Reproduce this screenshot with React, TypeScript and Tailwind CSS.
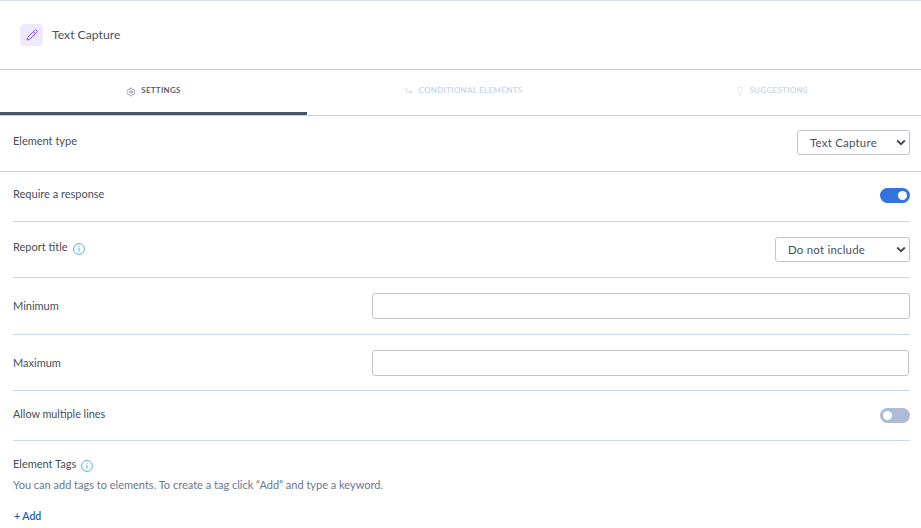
import { Lightbulb, Pencil, Settings, CornerDownRight } from "lucide-react";

function Info() {
  return (
    <svg width="12" height="12" viewBox="0 0 12 12" fill="none" className="ml-[5px] mt-[2px]">
      <circle cx="6" cy="6" r="5.4" stroke="#4fb3ea" strokeWidth="1" />
      <rect x="5.5" y="5" width="1" height="3.6" fill="#4fb3ea" />
      <rect x="5.5" y="3.1" width="1" height="1" fill="#4fb3ea" />
    </svg>
  );
}

function Select({ label, width }: { label: string; width: string }) {
  return (
    <div className={`${width} h-[25px] border border-[#c4c4c4] rounded-[3px] flex items-center justify-between pl-3 pr-[3px] text-[11.5px] text-[#4a5160] tracking-[0.2px]`}>
      <span>{label}</span>
      <svg width="10" height="7" viewBox="0 0 10 7" fill="none">
        <path d="M1.2 1.5 L5 5.2 L8.8 1.5" stroke="#3f4754" strokeWidth="1.8" />
      </svg>
    </div>
  );
}

function Toggle({ on }: { on: boolean }) {
  return (
    <div className={`w-[30px] h-[15px] rounded-full flex items-center px-[3px] ${on ? "bg-[#3273dc] justify-end" : "bg-[#aebbd6] justify-start"}`}>
      <div className="w-[9px] h-[9px] rounded-full bg-white" />
    </div>
  );
}

export default function App() {
  return (
    <div className="w-[921px] h-[528px] overflow-hidden bg-white font-['Lato',sans-serif] text-[#464e5c] border-t border-[#d5dde9]">
      {/* header */}
      <div className="h-[68px] flex items-center pl-5 gap-[9px] border-b border-[#c9d3e0] box-content">
        <div className="w-[23px] h-[22px] rounded-[4px] bg-[#efe9fd] flex items-center justify-center">
          <Pencil size={12} strokeWidth={2} className="text-[#7c4dff]" />
        </div>
        <span className="text-[12.2px] text-[#4a5160]">Text Capture</span>
      </div>

      {/* tabs */}
      <div className="h-[45px] grid grid-cols-3 border-b border-[#c9d3e0] box-content">
        <div className="relative flex justify-center pt-[15px] gap-[5px] text-[#4a5160]">
          <Settings size={10} strokeWidth={1.2} className="mt-[2px]" />
          <span className="text-[8px] font-semibold tracking-[0.3px] leading-[10px]">SETTINGS</span>
          <div className="absolute left-0 right-0 bottom-0 h-[3px] bg-[#4a5568]" />
        </div>
        <div className="flex justify-center pt-[15px] pl-[6px] gap-[6px] text-[#c5d5e9]">
          <CornerDownRight size={8} strokeWidth={1.4} className="mt-[2px] text-[#a9b4c4]" />
          <span className="text-[8px] font-semibold tracking-[0.3px] leading-[10px]">CONDITIONAL ELEMENTS</span>
        </div>
        <div className="flex justify-center pt-[15px] pl-[8px] gap-[4px] text-[#c5d5e9]">
          <Lightbulb size={10} strokeWidth={1.2} className="mt-[1px]" />
          <span className="text-[8px] font-semibold tracking-[0.3px] leading-[10px]">SUGGESTIONS</span>
        </div>
      </div>

      {/* element type */}
      <div className="h-[56px] flex justify-between pl-[13px] pr-[11px] pt-[14px] border-b border-[#c9d3e0]">
        <span className="text-[11px] leading-[21px]">Element type</span>
        <Select label="Text Capture" width="w-[113px]" />
      </div>

      <div className="pl-[13px] pr-[11px]">
        <div className="h-[50px] flex justify-between items-center border-b border-[#c9d8e8] pb-[3px]">
          <span className="text-[11px] mb-[2px]">Require a response</span>
          <Toggle on />
        </div>
        <div className="h-[56px] flex justify-between border-b border-[#c9d8e8] pt-[15px]">
          <div className="flex items-center h-[21px]">
            <span className="text-[11px]">Report title</span>
            <Info />
          </div>
          <Select label="Do not include" width="w-[135px]" />
        </div>
        <div className="h-[57px] flex justify-between items-center border-b border-[#c5d9ec]">
          <span className="text-[11px] mt-[1px]">Minimum</span>
          <input className="w-[538px] h-[26px] border border-[#c4c4c4] rounded-[3px]" />
        </div>
        <div className="h-[56px] flex justify-between items-center border-b border-[#c5d9ec]">
          <span className="text-[11px] mt-[1px]">Maximum</span>
          <input className="w-[537px] h-[26px] mr-px border border-[#c4c4c4] rounded-[3px]" />
        </div>
        <div className="h-[50px] flex justify-between items-center border-b border-[#c5d9ec]">
          <span className="text-[10.8px] mb-[2px]">Allow multiple lines</span>
          <Toggle on={false} />
        </div>
        <div className="pt-[15px]">
          <div className="flex items-center h-[17px]">
            <span className="text-[11px]">Element Tags</span>
            <Info />
          </div>
          <p className="text-[11px] text-[#6b7690] mt-[5px] leading-[14px]">
            You can add tags to elements. To create a tag click “Add” and type a keyword.
          </p>
          <button className="block text-[10.5px] font-semibold text-[#2456c4] mt-[17px] ml-px leading-[14px]">+ Add</button>
        </div>
      </div>
    </div>
  );
}
